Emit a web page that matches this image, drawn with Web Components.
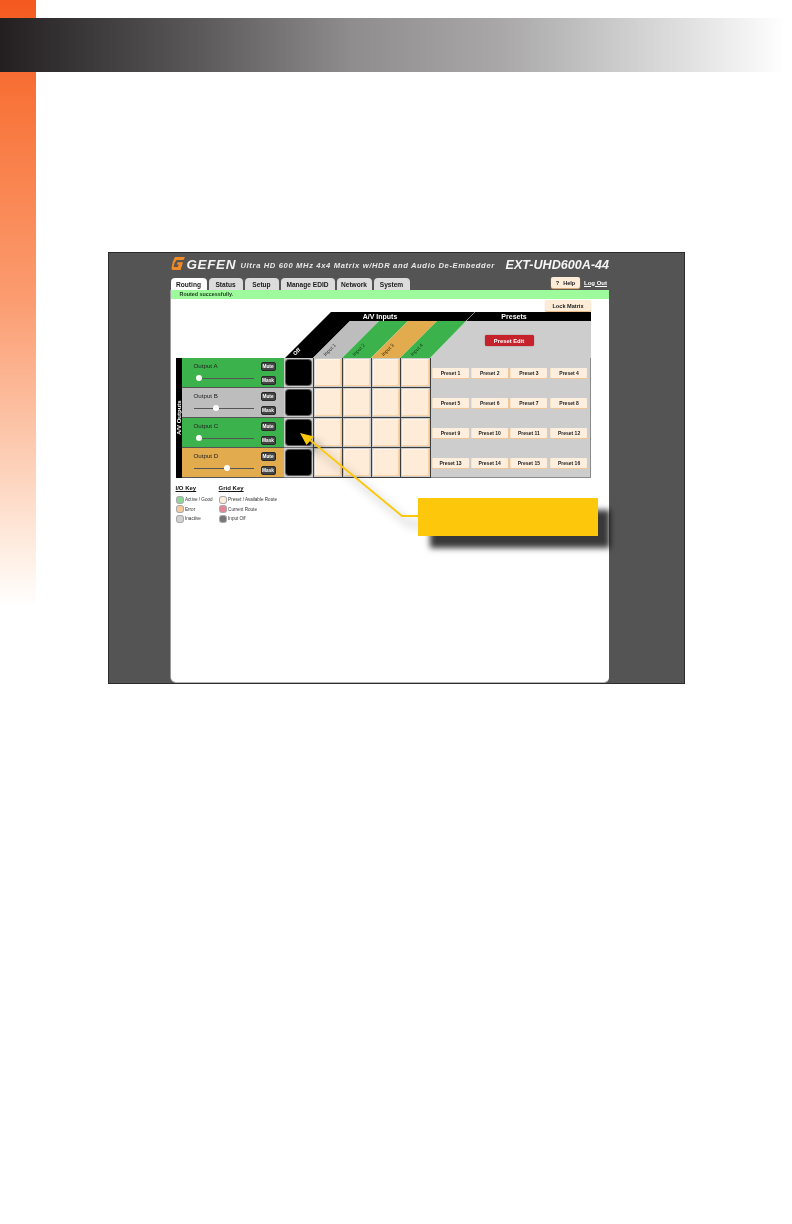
<!DOCTYPE html>
<html>
<head>
<meta charset="utf-8">
<title>Routing</title>
<style>
  html, body { margin: 0; padding: 0; background: #fff; }
  body { font-family: "Liberation Sans", Arial, sans-serif; }
</style>
</head>
<body>
<manual-page>
  <screen-frame>
    <gefen-title></gefen-title>
    <gefen-tabs></gefen-tabs>
    <routing-panel></routing-panel>
  </screen-frame>
</manual-page>

<script>
// helper, every element just sets its own shadow html
function shadow(el, html) {
  el.attachShadow({ mode: 'open' });
  el.shadowRoot.innerHTML = html;
}

class ManualPage extends HTMLElement {
  connectedCallback() {
    shadow(this, `
      <style>
        :host {
          display: block;
          width: 792px;
          height: 1224px;
          overflow: hidden;
          padding-top: 18px;
          box-sizing: border-box;
          background: linear-gradient(180deg, #f4591f 0, #f8743a 100px, #fb9c70 300px, #fdd5bf 480px, #fff1e7 560px, #fff 606px) 0 0 / 36px 606px no-repeat #fff;
        }
        .band {
          height: 54px;
          background: linear-gradient(90deg, #231f20 0, #5b595a 200px, #8e8c8c 350px, #a9a7a7 500px, #c6c6c6 600px, #e4e4e4 700px, #fff 785px);
        }
        .frame { margin: 180px 0 0 108px; }
      </style>
      <div class="band"></div>
      <div class="frame"><slot></slot></div>
    `);
  }
}

class ScreenFrame extends HTMLElement {
  connectedCallback() {
    shadow(this, `
      <style>
        :host {
          display: block;
          position: relative;
          box-sizing: border-box;
          width: 577px;
          height: 432px;
          padding: 0 75px 1px 61.5px;
          background: #545454;
          border: 1px solid #2c2c2c;
          filter: blur(0.3px); /* the shot in the manual is soft */
        }
        .col { display: flex; flex-direction: column; height: 100%; }
      </style>
      <div class="col"><slot></slot></div>
      <callout-arrow></callout-arrow>
    `);
  }
}

class GefenTitle extends HTMLElement {
  connectedCallback() {
    shadow(this, `
      <style>
        :host {
          display: flex;
          align-items: center;
          height: 24px;
          color: #f2f2f2;
          font-family: "Liberation Sans", Arial, sans-serif;
          font-weight: bold;
          font-style: italic;
          white-space: nowrap;
        }
        svg { width: 15px; height: 15px; flex: none; margin-top: -3px; }
        .brand { font-size: 13.5px; letter-spacing: 0.6px; margin: -1px 5px 0 1px; width: 49px; flex: none; }
        .name { font-size: 7.6px; letter-spacing: 0.64px; color: #e8e8e8; margin-top: 1px; width: 265px; flex: none; }
        .model { font-size: 12.6px; color: #f5f5f5; }
      </style>
      <svg viewBox="0 0 15 15"><path d="M4 1 H14 L12.5 4 H5.5 L3.6 7 L2.6 11 H6.8 L7.6 8.6 H5.6 L6.6 6.2 H12 L9.6 14 H1.4 L0.4 12.5 L1.8 5.5 Z" fill="#f08a24"/></svg>
      <span class="brand">GEFEN</span>
      <span class="name">Ultra HD 600 MHz 4x4 Matrix w/HDR and Audio De-Embedder</span>
      <span class="model">EXT-UHD600A-44</span>
    `);
  }
}

class GefenTabs extends HTMLElement {
  connectedCallback() {
    const tabs = [['Routing', 36], ['Status', 34], ['Setup', 34], ['Manage EDID', 54], ['Network', 35], ['System', 36]];
    shadow(this, `
      <style>
        :host {
          display: flex;
          align-items: flex-end;
          height: 13px;
          font: bold 6.6px "Liberation Sans", Arial, sans-serif;
          color: #1a1a1a;
        }
        .tab {
          height: 12px;
          margin-right: 2px;
          background: #dcdcdc;
          border-radius: 4px 4px 0 0;
          display: flex;
          align-items: center;
          justify-content: center;
        }
        .tab.on { background: #fff; margin-right: 2px; }
        .right { margin-left: auto; display: flex; align-items: center; gap: 4px; height: 13px; padding-bottom: 2px; box-sizing: border-box; margin-bottom: 0; }
        .help {
          width: 29px; height: 11px; background: #fdecd8; border-radius: 2px;
          display: flex; align-items: center; justify-content: center; gap: 4px;
          box-shadow: 0 1px 1px #e8b47c; font-size: 5.6px;
        }
        .out { color: #fff; text-decoration: underline; font-size: 6px; margin-right: 2px; }
      </style>
      ${tabs.map((t, i) => `<div class="tab ${i ? '' : 'on'}" style="width:${t[1]}px">${t[0]}</div>`).join('')}
      <div class="right">
        <div class="help"><span>?</span><span>Help</span></div>
        <span class="out">Log Out</span>
      </div>
    `);
  }
}

class RoutingPanel extends HTMLElement {
  connectedCallback() {
    shadow(this, `
      <style>
        :host {
          display: block;
          flex: 1;
          background: #fff;
          border-radius: 0 0 5px 5px;
          box-shadow: 0 1px 0 #b5b5b5, -1px 0 0 #9a9a9a;
          font-family: "Liberation Sans", Arial, sans-serif;
        }
        .status {
          height: 9px;
          background: #9dfb9b;
          padding-left: 9px;
          font-size: 5.4px;
          font-weight: bold;
          line-height: 8px;
          color: #1b3a1b;
        }
        .bar { display: flex; justify-content: flex-end; padding: 1px 18px 0 0; height: 13px; box-sizing: border-box; }
        .lock {
          width: 46px; height: 11px; background: #fdecd8; border-radius: 2px;
          box-shadow: 0 1px 1px #e8b47c; color: #222;
          font-size: 5.6px; font-weight: bold; display: flex; align-items: center; justify-content: center;
        }
        .wrap { padding-left: 5px; }
      </style>
      <div class="status">Routed successfully.</div>
      <div class="bar"><div class="lock">Lock Matrix</div></div>
      <div class="wrap">
        <matrix-head></matrix-head>
        <matrix-body></matrix-body>
        <key-legend></key-legend>
      </div>
    `);
  }
}

class MatrixHead extends HTMLElement {
  connectedCallback() {
    const label = (x, y, t, c) => `<text x="${x}" y="${y}" transform="rotate(-45 ${x} ${y})" text-anchor="middle" dominant-baseline="middle" font-size="5" fill="${c}">${t}</text>`;
    shadow(this, `
      <style>
        :host { display: grid; width: 415px; height: 46px; font-family: "Liberation Sans", Arial, sans-serif; }
        svg { grid-area: 1 / 1; width: 415px; height: 46px; display: block; }
        text { font-family: "Liberation Sans", Arial, sans-serif; }
        .edit {
          grid-area: 1 / 1;
          justify-self: start;
          margin: 23px 0 0 309px;
          width: 49px; height: 11px;
          background: #c5222b; color: #fff; border-radius: 2px;
          font-size: 5.8px; font-weight: bold;
          display: flex; align-items: center; justify-content: center;
          box-shadow: 0 0 1px #7a1015;
        }
      </style>
      <svg viewBox="176 312 415 46">
        <polygon points="430,358 466,321 591,321 591,358" fill="#cdcdcd"/>
        <polygon points="285,358 331,312 591,312 591,321 350,321 313,358" fill="#000"/>
        <polygon points="313,358 350,321 379,321 342,358" fill="#bdbdbd"/>
        <polygon points="342,358 379,321 408,321 371,358" fill="#3bb24b"/>
        <polygon points="371,358 408,321 437,321 400,358" fill="#e1ab4e"/>
        <polygon points="400,358 437,321 466,321 430,358" fill="#3bb24b"/>
        <line x1="466" y1="321" x2="475" y2="312" stroke="#e8e8e8" stroke-width="0.6"/>
        <text x="380" y="318.8" text-anchor="middle" font-size="7" font-weight="bold" fill="#fff">A/V Inputs</text>
        <text x="514" y="318.8" text-anchor="middle" font-size="7" font-weight="bold" fill="#fff">Presets</text>
        <text x="297" y="352" transform="rotate(-45 297 352)" text-anchor="middle" dominant-baseline="middle" font-size="5.4" font-weight="bold" fill="#fff">Off</text>
        ${label(330, 350, 'Input 1', '#333')}
        ${label(359, 350, 'Input 2', '#0f3d18')}
        ${label(388, 350, 'Input 3', '#3a2a08')}
        ${label(417, 350, 'Input 4', '#0f3d18')}
      </svg>
      <div class="edit">Preset Edit</div>
    `);
  }
}

class MatrixBody extends HTMLElement {
  connectedCallback() {
    const rows = [
      ['Output A', '#3bb24b', 2.5],
      ['Output B', '#bdbdbd', 19.5],
      ['Output C', '#3bb24b', 2.5],
      ['Output D', '#e1ab4e', 30.5]
    ];
    let cells = '';
    rows.forEach((r, i) => {
      cells += `<output-row label="${r[0]}" color="${r[1]}" pos="${r[2]}"></output-row>`;
      cells += `<div class="off"><div class="sq"></div></div>`;
      for (let c = 0; c < 4; c++) cells += `<div class="in"><div class="pad"></div></div>`;
      cells += `<div class="presets">`;
      for (let p = 1; p <= 4; p++) cells += `<preset-btn>Preset ${i * 4 + p}</preset-btn>`;
      cells += `</div>`;
    });
    shadow(this, `
      <style>
        :host {
          display: flex;
          width: 415px;
          height: 120px;
          font-family: "Liberation Sans", Arial, sans-serif;
        }
        .side {
          width: 6px;
          background: #000;
          color: #fff;
          font-size: 6px;
          font-weight: bold;
          writing-mode: vertical-rl;
          transform: rotate(180deg);
          text-align: center;
          line-height: 6px;
          white-space: nowrap;
        }
        .grid {
          flex: 1;
          display: grid;
          grid-template-columns: 102px 29px repeat(4, 29.25px) 1fr;
          grid-template-rows: repeat(4, 30px);
          background: #cdcdcd;
          box-shadow: inset -1px -1px 0 #8a8a8a;
        }
        .off { display: flex; align-items: center; justify-content: center; border-bottom: 1px solid #777; box-sizing: border-box; }
        .sq { width: 25px; height: 25px; background: #000; border-radius: 3px; box-shadow: 0 0 0 1px #555; }
        .in {
          border-left: 1px solid #3d3d3d;
          border-bottom: 1px solid #3d3d3d;
          box-sizing: border-box;
          display: flex;
          padding: 1px;
        }
        .pad { flex: 1; background: #feecd9; border-radius: 2px; box-shadow: inset -1px -1px 0 #fbd3a4, inset 1px 1px 0 #fff3e6; }
        .presets {
          display: grid;
          grid-template-columns: 36px 36px 36px 37px;
          column-gap: 3.2px;
          align-items: center;
          padding-left: 2px;
          border-left: 1px solid #3d3d3d;
          margin-right: 1px;
        }
        .presets preset-btn:last-child { margin-left: 1px; }
      </style>
      <div class="side">A/V Outputs</div>
      <div class="grid">${cells}</div>
    `);
  }
}

class OutputRow extends HTMLElement {
  connectedCallback() {
    const pos = this.getAttribute('pos');
    shadow(this, `
      <style>
        :host {
          display: flex;
          background: ${this.getAttribute('color')};
          border-bottom: 1px solid #555;
          box-sizing: border-box;
          padding: 4px 8px 0 12px;
          color: #222;
          font-size: 6.2px;
          gap: 7px;
        }
        .left { width: 60px; }
        .name { height: 10px; line-height: 7px; }
        .slider { display: flex; align-items: center; height: 8px; margin-top: 2px; }
        .line { height: 1px; background: #555; }
        .thumb { width: 6px; height: 6px; border-radius: 50%; background: #fff; flex: none; }
        .right { display: flex; flex-direction: column; gap: 4.5px; }
        .btn {
          width: 15px; height: 9px; border-radius: 2px;
          background: #444; color: #fff; border: 1px solid #2a2a2a; box-sizing: border-box;
          font-size: 4.8px; font-weight: bold;
          display: flex; align-items: center; justify-content: center;
        }
      </style>
      <div class="left">
        <div class="name">${this.getAttribute('label')}</div>
        <div class="slider">
          <span class="line" style="width:${pos}px;${pos < 5 ? 'background:none' : ''}"></span>
          <span class="thumb"></span>
          <span class="line" style="flex:1"></span>
        </div>
      </div>
      <div class="right"><div class="btn">Mute</div><div class="btn">Mask</div></div>
    `);
  }
}

class PresetBtn extends HTMLElement {
  connectedCallback() {
    shadow(this, `
      <style>
        :host {
          display: flex;
          align-items: center;
          justify-content: center;
          height: 10.5px;
          background: #fdeedd;
          border-radius: 1px;
          box-shadow: 1px 1px 0 #f0c698, -1px 0 0 #f7e2c8;
          font-size: 5px;
          font-weight: bold;
          color: #222;
          white-space: nowrap;
        }
      </style>
      <slot></slot>
    `);
  }
}

class KeyLegend extends HTMLElement {
  connectedCallback() {
    const item = (c, t) => `<div class="item"><span class="sw" style="background:${c}"></span>${t}</div>`;
    shadow(this, `
      <style>
        :host {
          display: flex;
          gap: 6px;
          padding: 7px 0 0 0;
          font-size: 4.6px;
          color: #333;
          font-family: "Liberation Sans", Arial, sans-serif;
        }
        h4 { margin: 0 0 3px; font-size: 6px; text-decoration: underline; color: #111; line-height: 7px; }
        .item { display: flex; align-items: center; gap: 2.5px; height: 9.6px; white-space: nowrap; }
        .sw { width: 6px; height: 6px; border-radius: 2px; box-shadow: 0 0 0 1px #aaa; margin-left: 1px; }
      </style>
      <div>
        <h4>I/O Key</h4>
        ${item('#8fd498', 'Active / Good')}
        ${item('#f6cb9c', 'Error')}
        ${item('#d2d2d2', 'Inactive')}
      </div>
      <div>
        <h4>Grid Key</h4>
        ${item('#fdeede', 'Preset / Available Route')}
        ${item('#e58596', 'Current Route')}
        ${item('#777', 'Input Off')}
      </div>
    `);
  }
}

class CalloutArrow extends HTMLElement {
  connectedCallback() {
    shadow(this, `
      <style>
        :host { position: absolute; left: -1px; top: -1px; width: 577px; height: 432px; pointer-events: none; }
        svg { position: absolute; left: 0; top: 0; overflow: visible; filter: drop-shadow(7px 8px 5px rgba(0,0,0,.4)); }
        .box {
          position: absolute; left: 310px; top: 246px; width: 180px; height: 38px;
          background: #fdc70c;
          box-shadow: 12px 12px 6px rgba(0,0,0,.78);
        }
      </style>
      <svg width="577" height="432" viewBox="108 252 577 432">
        <polyline points="418,516 402,516 310,440" fill="none" stroke="#fdc70c" stroke-width="1.8"/>
        <polygon points="300,433 314,436.5 306.5,445" fill="#fdc70c"/>
      </svg>
      <div class="box"></div>
    `);
  }
}

customElements.define('manual-page', ManualPage);
customElements.define('screen-frame', ScreenFrame);
customElements.define('gefen-title', GefenTitle);
customElements.define('gefen-tabs', GefenTabs);
customElements.define('routing-panel', RoutingPanel);
customElements.define('matrix-head', MatrixHead);
customElements.define('matrix-body', MatrixBody);
customElements.define('output-row', OutputRow);
customElements.define('preset-btn', PresetBtn);
customElements.define('key-legend', KeyLegend);
customElements.define('callout-arrow', CalloutArrow);
</script>
</body>
</html>
